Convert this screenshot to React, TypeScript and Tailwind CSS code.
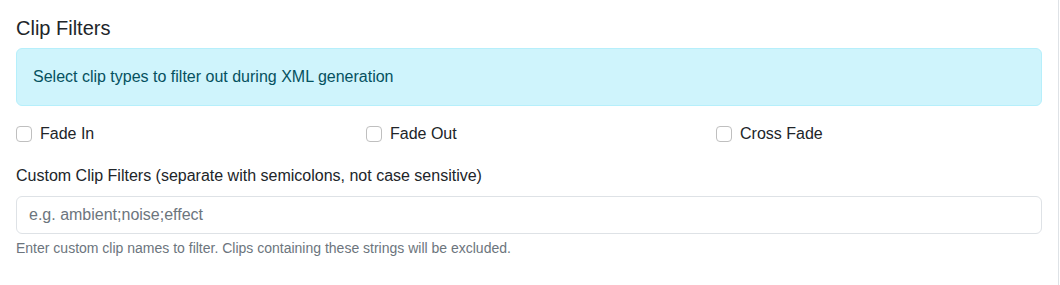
import React from "react";

const boxes = ["Fade In", "Fade Out", "Cross Fade"];

export default function App() {
  return (
    <div
      className="w-[1059px] h-[285px] bg-white border-r border-[#dee2e6] px-4 pt-4 text-[#212529]"
      style={{ fontFamily: '"Liberation Sans", Arial, sans-serif' }}
    >
      <h5 className="text-[20px] leading-[24px] mb-2 font-normal">Clip Filters</h5>
      <div className="bg-[#cff4fc] border border-[#b6effb] text-[#055160] rounded-[6px] p-4 text-[16px] leading-[24px] mb-4">
        Select clip types to filter out during XML generation
      </div>
      <div className="grid grid-cols-3 gap-x-6 mb-4">
        {boxes.map((b) => (
          <label key={b} className="flex items-start gap-2 text-[16px] leading-[24px] mb-[2px]">
            <span className="mt-[4px] w-4 h-4 border border-[#bfbfbf] rounded-[4px] bg-white shrink-0" />
            <span>{b}</span>
          </label>
        ))}
      </div>
      <div className="text-[16px] leading-[24px] mb-2">
        Custom Clip Filters (separate with semicolons, not case sensitive)
      </div>
      <input
        type="text"
        placeholder="e.g. ambient;noise;effect"
        className="block w-full h-[38px] px-3 py-[6px] text-[16px] leading-[24px] border border-[#dee2e6] rounded-[6px] placeholder:text-[#6c757d] outline-none"
        style={{ fontFamily: '"Liberation Sans", Arial, sans-serif' }}
      />
      <div className="mt-1 text-[14px] leading-[21px] text-[#6c757d]">
        Enter custom clip names to filter. Clips containing these strings will be excluded.
      </div>
    </div>
  );
}
